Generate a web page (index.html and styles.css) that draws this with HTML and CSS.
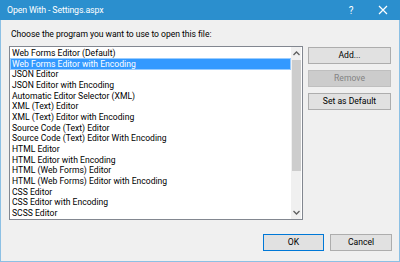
FILE: index.html
```html
<!DOCTYPE html>
<html>
<head>
<meta charset="utf-8">
<link rel="stylesheet" href="styles.css">
</head>
<body>
<div class="window">
  <div class="titlebar">
    <span class="title">Open With - Settings.aspx</span>
    <div class="controls">
      <span class="help">?</span>
      <svg class="close" width="10" height="10" viewBox="0 0 10 10"><path d="M1 1L9 9M9 1L1 9" stroke="#fff" stroke-width="1.2"/></svg>
    </div>
  </div>
  <div class="content">
    <div class="label">Choose the program you want to use to open this file:</div>
    <div class="main">
      <div class="listbox">
        <ul class="items">
          <li>Web Forms Editor (Default)</li>
          <li class="selected">Web Forms Editor with Encoding</li>
          <li>JSON Editor</li>
          <li>JSON Editor with Encoding</li>
          <li>Automatic Editor Selector (XML)</li>
          <li>XML (Text) Editor</li>
          <li>XML (Text) Editor with Encoding</li>
          <li>Source Code (Text) Editor</li>
          <li>Source Code (Text) Editor With Encoding</li>
          <li>HTML Editor</li>
          <li>HTML Editor with Encoding</li>
          <li>HTML (Web Forms) Editor</li>
          <li>HTML (Web Forms) Editor with Encoding</li>
          <li>CSS Editor</li>
          <li>CSS Editor with Encoding</li>
          <li>SCSS Editor</li>
        </ul>
        <div class="scrollbar">
          <svg class="arrow" width="9" height="9" viewBox="0 0 9 9"><path d="M1.5 6L4.5 3L7.5 6" fill="none" stroke="#606060" stroke-width="1.3"/></svg>
          <div class="track"><div class="thumb"></div></div>
          <svg class="arrow" width="9" height="9" viewBox="0 0 9 9"><path d="M1.5 3L4.5 6L7.5 3" fill="none" stroke="#606060" stroke-width="1.3"/></svg>
        </div>
      </div>
      <div class="side">
        <button class="btn">Add...</button>
        <button class="btn disabled">Remove</button>
        <button class="btn">Set as Default</button>
      </div>
    </div>
    <div class="footer">
      <button class="btn ok">OK</button>
      <button class="btn cancel">Cancel</button>
    </div>
  </div>
</div>
</body>
</html>
```
FILE: styles.css
```css
html, body {
  margin: 0;
  padding: 0;
}
body {
  width: 400px;
  height: 262px;
  overflow: hidden;
  font-family: Roboto, "Noto Sans", sans-serif;
  font-size: 8.6px;
  color: #000;
}
.window {
  box-sizing: border-box;
  width: 400px;
  height: 262px;
  background: #f0f0f0;
  border: 1px solid #8cc0e4;
  border-top: none;
  display: flex;
  flex-direction: column;
}
.titlebar {
  height: 20px;
  margin: 0 -1px;
  background: #2b8fce;
  color: #fff;
  display: flex;
  align-items: center;
  justify-content: space-between;
  padding: 0 0 0 7px;
}
.title {
  font-size: 8.8px;
  line-height: 20px;
  letter-spacing: -0.15px;
}
.controls {
  display: flex;
  align-items: center;
  height: 20px;
}
.help {
  font-size: 10px;
  width: 12px;
  text-align: center;
  margin-right: 21px;
}
.close {
  margin: 0 12px 0 0;
  display: block;
}
.content {
  flex: 1;
  display: flex;
  flex-direction: column;
  padding: 0 7px 0 8px;
}
.label {
  margin-top: 8px;
  line-height: 12px;
  height: 13px;
  padding-left: 2px;
  letter-spacing: -0.05px;
}
.main {
  display: flex;
  gap: 5px;
  margin-top: 5px;
}
.listbox {
  box-sizing: border-box;
  width: 294px;
  height: 174px;
  border: 1px solid #828790;
  background: #fff;
  display: flex;
}
.items {
  list-style: none;
  margin: 0;
  padding: 1px 1px 0 1px;
  flex: 1;
  overflow: hidden;
}
.items li {
  height: 10.67px;
  line-height: 10.67px;
  padding-left: 1px;
  white-space: nowrap;
}
.items li.selected {
  background: #3399ff;
  color: #fff;
  outline: 1px solid #99ccff;
  outline-offset: 0;
}
.scrollbar {
  width: 10px;
  background: #f0f0f0;
  display: flex;
  flex-direction: column;
  align-items: center;
  margin-right: 1px;
}
.arrow {
  display: block;
  flex: none;
  margin: 2px 0;
}
.track {
  flex: 1;
  width: 100%;
  display: flex;
  flex-direction: column;
}
.thumb {
  height: 111px;
  background: #cdcdcd;
  margin: 0 0 0 1px;
}
.side {
  display: flex;
  flex-direction: column;
  gap: 6px;
  padding-top: 1px;
}
.btn {
  box-sizing: border-box;
  width: 83px;
  height: 17px;
  padding: 0;
  background: #e1e1e1;
  border: 1px solid #adadad;
  font-family: Roboto, "Noto Sans", sans-serif;
  font-size: 8.6px;
  color: #000;
  line-height: 15px;
}
.btn.disabled {
  background: #cccccc;
  border-color: #bfbfbf;
  color: #838383;
}
.footer {
  display: flex;
  justify-content: flex-end;
  gap: 6px;
  margin-top: 14px;
}
.btn.ok {
  width: 61px;
  border-color: #0078d7;
}
.btn.cancel {
  width: 62px;
}
```
